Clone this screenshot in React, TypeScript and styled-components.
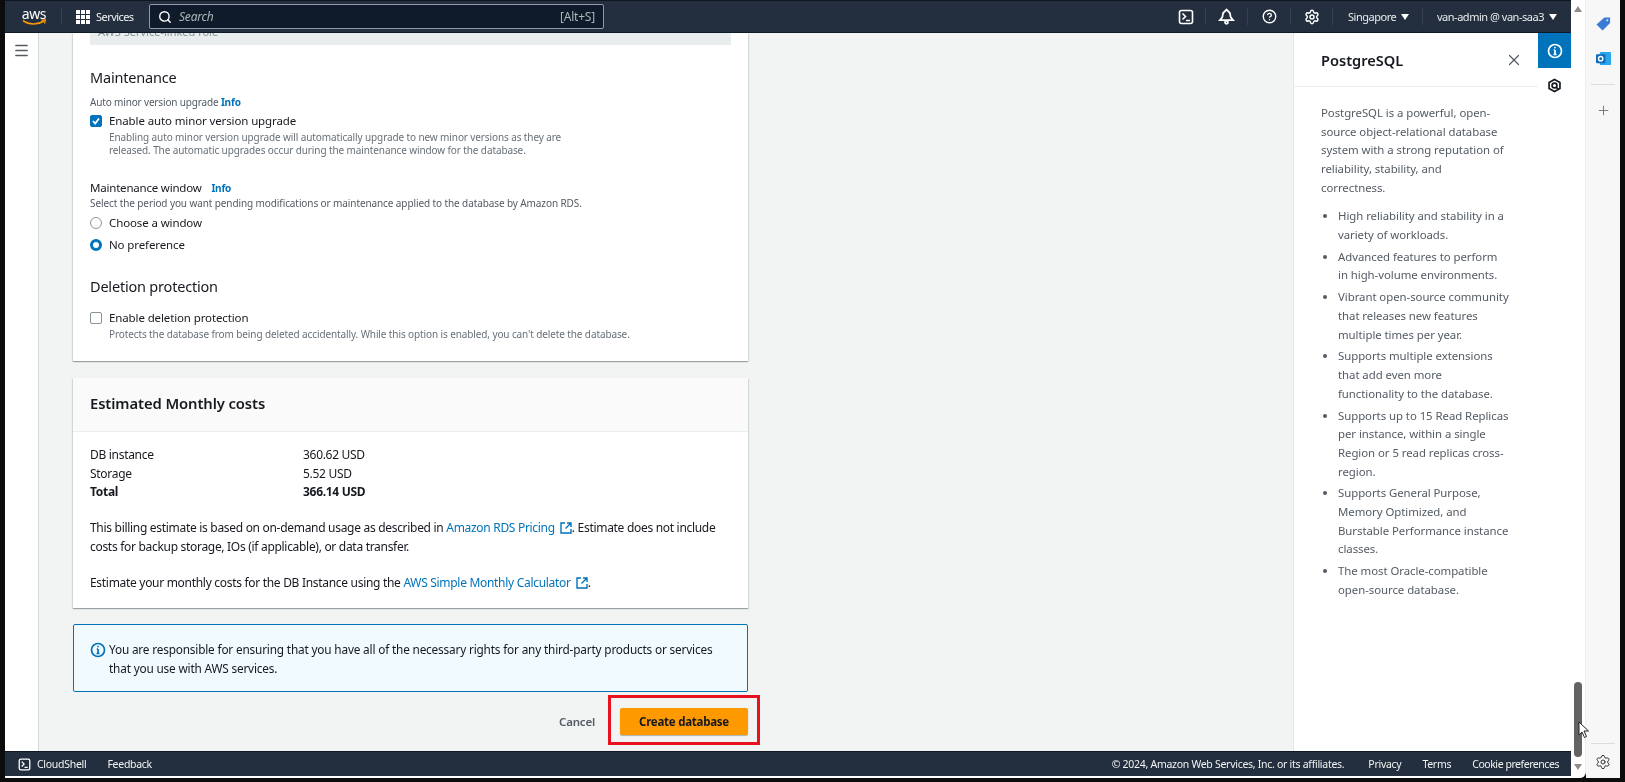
import React from 'react'
import styled, { createGlobalStyle } from 'styled-components'
import { Menu, Search, X, Plus, Settings, CircleHelp } from 'lucide-react'

const GlobalStyle = createGlobalStyle`
  html, body { margin: 0; padding: 0; background: #000; }
  * { box-sizing: border-box; }
  body { font-family: "Noto Sans", Roboto, sans-serif; }
`

const Frame = styled.div`
  width: 1625px;
  height: 782px;
  padding: 0 5px 4px;
  background: #0c0c0c;
  display: flex;
  overflow: hidden;
  position: relative;
  filter: blur(0.3px);
`

const Page = styled.div`
  width: 1566px;
  display: flex;
  flex-direction: column;
  background: #fff;
`

const TopNav = styled.header`
  height: 33px;
  flex: none;
  background: #232f3e;
  border-top: 1px solid #10161f;
  border-bottom: 1px solid #0e1a2a;
  display: flex;
  align-items: center;
  color: #e9ebed;
  font-size: 11px;
  letter-spacing: -0.25px;
`

const LogoBox = styled.div`
  width: 49px;
  margin-left: 7px;
  padding-right: 5px;
  display: flex;
  flex-direction: column;
  align-items: center;
  font-size: 14px;
  line-height: 12px;
  color: #fff;
  letter-spacing: -0.4px;
  svg { margin-top: -1px; }
`

const NavSep = styled.span`
  width: 1px;
  height: 17px;
  background: #38424f;
`

const ServicesBtn = styled.div`
  display: flex;
  align-items: center;
  gap: 6px;
  margin-left: 14px;
  width: 73px;
  color: #f2f3f3;
  letter-spacing: -0.55px;
`

const DotGrid = styled.div`
  display: grid;
  grid-template-columns: repeat(3, 4px);
  grid-auto-rows: 4px;
  gap: 1px;
  i { background: #fff; display: block; }
`

const SearchBox = styled.div`
  width: 455px;
  height: 25px;
  background: #0f1b2a;
  border: 1px solid #8d99a8;
  border-radius: 2px;
  display: flex;
  align-items: center;
  padding: 0 8px;
  gap: 7px;
  color: #aab7b8;
  font-size: 12px;
  letter-spacing: -0.2px;
  svg { color: #fff; }
`

const SearchHint = styled.span`
  font-style: italic;
  flex: 1;
`

const NavRight = styled.div`
  margin-left: auto;
  display: flex;
  align-items: center;
  height: 100%;
`

const NavIcon = styled.div`
  width: 42.5px;
  height: 100%;
  display: flex;
  align-items: center;
  justify-content: center;
  color: #fff;
  position: relative;
  &:first-child { padding-left: 4px; }
  &::after {
    content: '';
    position: absolute;
    right: 0;
    top: 7px;
    bottom: 7px;
    width: 1px;
    background: #38424f;
  }
`

const NavMenu = styled.div<{ $w: number; $pad: number; $sep?: boolean }>`
  width: ${(p) => p.$w}px;
  height: 100%;
  padding-left: ${(p) => p.$pad}px;
  display: flex;
  align-items: center;
  gap: 5px;
  white-space: nowrap;
  position: relative;
  letter-spacing: -0.48px;
  ${(p) =>
    p.$sep &&
    `&::after {
      content: '';
      position: absolute;
      right: 0;
      top: 7px;
      bottom: 7px;
      width: 1px;
      background: #38424f;
    }`}
`

const Caret = styled.span`
  width: 0;
  height: 0;
  border-left: 4.5px solid transparent;
  border-right: 4.5px solid transparent;
  border-top: 6px solid #fff;
`

const Body = styled.div`
  flex: 1;
  min-height: 0;
  display: flex;
  background: #f2f3f3;
`

const LeftRail = styled.nav`
  width: 34px;
  flex: none;
  background: #fff;
  border-right: 1px solid #d5dbdb;
  display: flex;
  justify-content: center;
  padding-top: 9px;
  color: #545b64;
`

const Main = styled.main`
  flex: 1;
  min-width: 0;
  padding-left: 34px;
  color: #16191f;
  overflow: hidden;
`

const Card = styled.section`
  width: 675px;
  background: #fff;
  box-shadow: 0 1px 1px 0 rgba(0, 28, 36, 0.22), 1px 1px 1px 0 rgba(0, 28, 36, 0.1), -1px 1px 1px 0 rgba(0, 28, 36, 0.1);
`

const FormCard = styled(Card)`
  height: 328px;
  padding: 0 17px;
`

const ClippedRole = styled.div`
  height: 12px;
  background: #eaeded;
  overflow: hidden;
  color: #879596;
  font-size: 11px;
  line-height: 12px;
  padding-left: 8px;
  span { display: block; margin-top: -7px; }
`

const Heading = styled.h3<{ $mt: number }>`
  margin: ${(p) => p.$mt}px 0 0;
  font-size: 14.5px;
  font-weight: 400;
  line-height: 22px;
  letter-spacing: -0.2px;
  color: #16191f;
`

const Caption = styled.div<{ $mt?: number; $track?: number }>`
  margin-top: ${(p) => p.$mt ?? 0}px;
  font-size: 10px;
  line-height: 16px;
  color: #545b64;
  letter-spacing: ${(p) => p.$track ?? -0.1}px;
`

const FieldLabel = styled.div<{ $mt: number }>`
  margin-top: ${(p) => p.$mt}px;
  font-size: 11.5px;
  line-height: 18px;
  color: #16191f;
  letter-spacing: -0.2px;
`

const InfoLink = styled.a<{ $ml?: number }>`
  color: #0073bb;
  font-weight: 700;
  font-size: 10px;
  margin-left: ${(p) => p.$ml ?? 0}px;
`

const OptionRow = styled.div<{ $mt: number }>`
  margin-top: ${(p) => p.$mt}px;
  display: flex;
  align-items: center;
  gap: 7px;
  font-size: 11.5px;
  line-height: 18px;
  color: #16191f;
  letter-spacing: -0.12px;
`

const Checkbox = styled.span<{ $on?: boolean }>`
  width: 12px;
  height: 12px;
  flex: none;
  border-radius: 2px;
  display: flex;
  align-items: center;
  justify-content: center;
  background: ${(p) => (p.$on ? '#0073bb' : '#fff')};
  border: 1px solid ${(p) => (p.$on ? '#0073bb' : '#879596')};
`

const Radio = styled.span<{ $on?: boolean }>`
  width: 12px;
  height: 12px;
  flex: none;
  border-radius: 50%;
  background: #fff;
  border: ${(p) => (p.$on ? '3.5px solid #0073bb' : '1px solid #879596')};
`

const OptionDesc = styled.div`
  margin-left: 19px;
  font-size: 10px;
  line-height: 13px;
  color: #687078;
  letter-spacing: -0.11px;
  padding-top: 1px;
  white-space: nowrap;
`

const CostCard = styled(Card)`
  margin-top: 17px;
  height: 230px;
`

const CostHeader = styled.div`
  height: 54px;
  background: #fafafa;
  border-bottom: 1px solid #eaeded;
  padding: 0 17px 4px;
  display: flex;
  align-items: center;
  font-size: 14.8px;
  font-weight: 600;
  letter-spacing: -0.1px;
`

const CostBody = styled.div`
  padding: 14px 17px 0;
  font-size: 12px;
  line-height: 18.5px;
  letter-spacing: -0.3px;
  color: #16191f;
`

const CostRow = styled.div<{ $bold?: boolean }>`
  display: grid;
  grid-template-columns: 213px 1fr;
  font-weight: ${(p) => (p.$bold ? 700 : 400)};
`

const CostNote = styled.p`
  margin: 17.5px 0 0;
  white-space: nowrap;
`

const ExtLink = styled.a`
  color: #0073bb;
  svg { vertical-align: -2px; margin-left: 5px; }
`

const Alert = styled.div`
  margin-top: 16px;
  width: 675px;
  height: 68px;
  background: #f1faff;
  border: 1px solid #0073bb;
  border-radius: 2px;
  padding: 15px 17px 0 16px;
  display: flex;
  gap: 3px;
  font-size: 11.8px;
  line-height: 18.6px;
  letter-spacing: -0.17px;
  white-space: nowrap;
  color: #16191f;
  svg { flex: none; margin-top: 2px; }
`

const Actions = styled.div`
  margin-top: 16px;
  width: 675px;
  display: flex;
  justify-content: flex-end;
  align-items: center;
  gap: 25px;
`

const CancelBtn = styled.span`
  color: #545b64;
  font-size: 11.5px;
  font-weight: 600;
  letter-spacing: -0.2px;
`

const PrimaryBtn = styled.button`
  width: 128px;
  height: 27px;
  background: #ff9900;
  border: none;
  border-radius: 2px;
  font-family: inherit;
  font-size: 11.5px;
  font-weight: 700;
  letter-spacing: -0.25px;
  color: #16191f;
  position: relative;
  box-shadow: 0 1px 1px rgba(0, 28, 36, 0.3);
  &::after {
    content: '';
    position: absolute;
    inset: -13px -12px -10px;
    border: 3px solid #e8111f;
  }
`

const HelpPanel = styled.aside`
  width: 245px;
  flex: none;
  background: #fff;
  border-left: 1px solid #e4e7e7;
  display: flex;
  flex-direction: column;
`

const HelpHeader = styled.div`
  height: 54px;
  flex: none;
  border-bottom: 1px solid #eaeded;
  padding: 0 15px 0 27px;
  display: flex;
  align-items: center;
  justify-content: space-between;
  font-size: 14.6px;
  font-weight: 600;
  color: #16191f;
`

const HelpContent = styled.div`
  padding: 17px 0 0 27px;
  font-size: 11.4px;
  line-height: 18.65px;
  letter-spacing: -0.05px;
  color: #545b64;
  white-space: nowrap;
  p { margin: 0 0 10px; }
  ul { margin: 0; padding-left: 17px; }
  li { margin-bottom: 3.2px; }
`

const ToolsRail = styled.div`
  width: 33px;
  flex: none;
  background: #fff;
  display: flex;
  flex-direction: column;
`

const ToolBtn = styled.div<{ $active?: boolean }>`
  height: 35px;
  display: flex;
  align-items: center;
  justify-content: center;
  background: ${(p) => (p.$active ? '#0073bb' : '#fff')};
  color: ${(p) => (p.$active ? '#fff' : '#16191f')};
`

const Footer = styled.footer`
  height: 25px;
  flex: none;
  background: #232f3e;
  border-top: 1px solid #0f1822;
  color: #f2f3f3;
  display: flex;
  align-items: center;
  padding-left: 13px;
  font-size: 10.5px;
  letter-spacing: -0.28px;
  white-space: nowrap;
`

const FootLink = styled.span<{ $ml?: number }>`
  margin-left: ${(p) => p.$ml ?? 0}px;
  display: flex;
  align-items: center;
  gap: 6px;
`

const FootRight = styled.div`
  margin-left: auto;
  padding-right: 12px;
  display: flex;
  align-items: center;
  gap: 21px;
`

const Copyright = styled.span`
  margin-right: 3px;
`

const CookieLink = styled.span`
  letter-spacing: -0.45px;
`

const BottomStrip = styled.div`
  height: 2px;
  flex: none;
  background: #fff;
`

const Track = styled.div`
  width: 15px;
  flex: none;
  background: #fff;
  border-right: 1px solid #eee;
  border-bottom-right-radius: 6px;
  display: flex;
  flex-direction: column;
  align-items: center;
  padding-top: 6px;
`

const ScrollUp = styled.span`
  width: 0;
  height: 0;
  border-left: 4px solid transparent;
  border-right: 4px solid transparent;
  border-bottom: 6px solid #8c8c8c;
`

const ScrollDown = styled.span`
  width: 0;
  height: 0;
  margin-top: 7px;
  border-left: 4px solid transparent;
  border-right: 4px solid transparent;
  border-top: 6px solid #8c8c8c;
`

const Thumb = styled.div`
  width: 8px;
  height: 75px;
  margin-top: 670px;
  border-radius: 4px;
  background: #636363;
`

const EdgeBar = styled.div`
  width: 34px;
  flex: none;
  background: #f7f7f7;
  display: flex;
  flex-direction: column;
  align-items: center;
  padding-top: 16px;
  color: #6b6b6b;
`

const EdgeSep = styled.div`
  width: 24px;
  height: 1px;
  background: #dcdcdc;
`

const EdgeSlot = styled.div<{ $mt: number }>`
  margin-top: ${(p) => p.$mt}px;
  display: flex;
`

const Pointer = styled.svg`
  position: absolute;
  left: 1578px;
  top: 721px;
`

const TerminalIcon = ({ size = 16 }: { size?: number }) => (
  <svg width={size} height={size} viewBox="0 0 16 16" fill="none" stroke="#fff" strokeWidth="1.6">
    <rect x="1.5" y="1.5" width="13" height="13" rx="2" />
    <path d="M4.5 4.5 7.5 7.5 4.5 10.5M8 11.5h4" />
  </svg>
)

const InfoIcon = ({ color }: { color: string }) => (
  <svg width="16" height="16" viewBox="0 0 16 16" fill="none" stroke={color} strokeWidth="1.7">
    <circle cx="8" cy="8" r="6.5" />
    <path d="M8 7v4.5M6.5 11.5h3M6.8 7H8" />
    <circle cx="8" cy="4.6" r="0.9" fill={color} stroke="none" />
  </svg>
)

const ExternalIcon = () => (
  <svg width="12" height="12" viewBox="0 0 12 12" fill="none" stroke="#0073bb" strokeWidth="1.4">
    <path d="M5 1H1v10h10V7M7 1h4v4M11 1 5.5 6.5" />
  </svg>
)

const App: React.FC = () => {
  return (
    <>
      <GlobalStyle />
      <Frame>
        <Page>
          <TopNav>
            <LogoBox>
              <span>aws</span>
              <svg width="26" height="7" viewBox="0 0 26 7" fill="none">
                <path d="M2 1.5C8 6 17 6 23 2" stroke="#f90" strokeWidth="1.6" />
                <path d="M20.5 1.2 24.5 1 23.5 4.6" stroke="#f90" strokeWidth="1.2" />
              </svg>
            </LogoBox>
            <NavSep />
            <ServicesBtn>
              <DotGrid>
                {Array.from({ length: 9 }).map((_, i) => (
                  <i key={i} />
                ))}
              </DotGrid>
              <span>Services</span>
            </ServicesBtn>
            <SearchBox>
              <Search size={14} strokeWidth={2.4} />
              <SearchHint>Search</SearchHint>
              <span>[Alt+S]</span>
            </SearchBox>
            <NavRight>
              <NavIcon>
                <TerminalIcon />
              </NavIcon>
              <NavIcon>
                <svg width="17" height="17" viewBox="0 0 16 16" fill="none" stroke="#fff" strokeWidth="1.7">
                  <path d="M8 1.5 5 4.5c-.6 1-.5 3-1 4.3L1.8 11.5h12.4L12 8.8c-.5-1.3-.4-3.3-1-4.3Z" />
                  <circle cx="8" cy="13.5" r="1.4" />
                </svg>
              </NavIcon>
              <NavIcon>
                <CircleHelp size={15} strokeWidth={2.2} />
              </NavIcon>
              <NavIcon>
                <Settings size={16} strokeWidth={2.2} />
              </NavIcon>
              <NavMenu $w={90} $pad={15} $sep>
                <span>Singapore</span>
                <Caret />
              </NavMenu>
              <NavMenu $w={148} $pad={14}>
                <span>van-admin @ van-saa3</span>
                <Caret />
              </NavMenu>
            </NavRight>
          </TopNav>
          <Body>
            <LeftRail>
              <Menu size={17} strokeWidth={2} />
            </LeftRail>
            <Main>
              <FormCard>
                <ClippedRole>
                  <span>AWS Service-linked role</span>
                </ClippedRole>
                <Heading $mt={21}>Maintenance</Heading>
                <Caption $mt={6} $track={-0.16}>
                  Auto minor version upgrade <InfoLink>Info</InfoLink>
                </Caption>
                <OptionRow $mt={2}>
                  <Checkbox $on>
                    <svg width="10" height="10" viewBox="0 0 10 10" fill="none" stroke="#fff" strokeWidth="1.8">
                      <path d="M2 5 4.2 7.5 8 2.5" />
                    </svg>
                  </Checkbox>
                  Enable auto minor version upgrade
                </OptionRow>
                <OptionDesc>
                  Enabling auto minor version upgrade will automatically upgrade to new minor versions as they are
                  <br />
                  released. The automatic upgrades occur during the maintenance window for the database.
                </OptionDesc>
                <FieldLabel $mt={22}>
                  Maintenance window <InfoLink $ml={7}>Info</InfoLink>
                </FieldLabel>
                <Caption $mt={-2}>Select the period you want pending modifications or maintenance applied to the database by Amazon RDS.</Caption>
                <OptionRow $mt={3}>
                  <Radio />
                  Choose a window
                </OptionRow>
                <OptionRow $mt={4}>
                  <Radio $on />
                  No preference
                </OptionRow>
                <Heading $mt={21}>Deletion protection</Heading>
                <OptionRow $mt={12}>
                  <Checkbox />
                  Enable deletion protection
                </OptionRow>
                <OptionDesc>Protects the database from being deleted accidentally. While this option is enabled, you can't delete the database.</OptionDesc>
              </FormCard>

              <CostCard>
                <CostHeader>Estimated Monthly costs</CostHeader>
                <CostBody>
                  <CostRow>
                    <span>DB instance</span>
                    <span>360.62 USD</span>
                  </CostRow>
                  <CostRow>
                    <span>Storage</span>
                    <span>5.52 USD</span>
                  </CostRow>
                  <CostRow $bold>
                    <span>Total</span>
                    <span>366.14 USD</span>
                  </CostRow>
                  <CostNote>
                    This billing estimate is based on on-demand usage as described in{' '}
                    <ExtLink>
                      Amazon RDS Pricing
                      <ExternalIcon />
                    </ExtLink>
                    . Estimate does not include
                    <br />
                    costs for backup storage, IOs (if applicable), or data transfer.
                  </CostNote>
                  <CostNote>
                    Estimate your monthly costs for the DB Instance using the{' '}
                    <ExtLink>
                      AWS Simple Monthly Calculator
                      <ExternalIcon />
                    </ExtLink>
                    .
                  </CostNote>
                </CostBody>
              </CostCard>

              <Alert>
                <InfoIcon color="#0073bb" />
                <div>
                  You are responsible for ensuring that you have all of the necessary rights for any third-party products or services
                  <br />
                  that you use with AWS services.
                </div>
              </Alert>

              <Actions>
                <CancelBtn>Cancel</CancelBtn>
                <PrimaryBtn>Create database</PrimaryBtn>
              </Actions>
            </Main>
            <HelpPanel>
              <HelpHeader>
                <span>PostgreSQL</span>
                <X size={18} strokeWidth={1.6} color="#545b64" />
              </HelpHeader>
              <HelpContent>
                <p>
                  PostgreSQL is a powerful, open-
                  <br />
                  source object-relational database
                  <br />
                  system with a strong reputation of
                  <br />
                  reliability, stability, and
                  <br />
                  correctness.
                </p>
                <ul>
                  <li>
                    High reliability and stability in a
                    <br />
                    variety of workloads.
                  </li>
                  <li>
                    Advanced features to perform
                    <br />
                    in high-volume environments.
                  </li>
                  <li>
                    Vibrant open-source community
                    <br />
                    that releases new features
                    <br />
                    multiple times per year.
                  </li>
                  <li>
                    Supports multiple extensions
                    <br />
                    that add even more
                    <br />
                    functionality to the database.
                  </li>
                  <li>
                    Supports up to 15 Read Replicas
                    <br />
                    per instance, within a single
                    <br />
                    Region or 5 read replicas cross-
                    <br />
                    region.
                  </li>
                  <li>
                    Supports General Purpose,
                    <br />
                    Memory Optimized, and
                    <br />
                    Burstable Performance instance
                    <br />
                    classes.
                  </li>
                  <li>
                    The most Oracle-compatible
                    <br />
                    open-source database.
                  </li>
                </ul>
              </HelpContent>
            </HelpPanel>
            <ToolsRail>
              <ToolBtn $active>
                <InfoIcon color="#fff" />
              </ToolBtn>
              <ToolBtn>
                <svg width="15" height="15" viewBox="0 0 16 16" fill="none" stroke="#16191f" strokeWidth="1.8">
                  <path d="M8 1.5 13.8 4.7V11.3L8 14.5 2.2 11.3V4.7Z" />
                  <circle cx="8" cy="8" r="2.6" />
                  <path d="M10 10 12 12" />
                </svg>
              </ToolBtn>
            </ToolsRail>
          </Body>
          <Footer>
            <FootLink>
              <TerminalIcon size={13} />
              CloudShell
            </FootLink>
            <FootLink $ml={21}>Feedback</FootLink>
            <FootRight>
              <Copyright>© 2024, Amazon Web Services, Inc. or its affiliates.</Copyright>
              <span>Privacy</span>
              <span>Terms</span>
              <CookieLink>Cookie preferences</CookieLink>
            </FootRight>
          </Footer>
          <BottomStrip />
        </Page>
        <Track>
          <ScrollUp />
          <Thumb />
          <ScrollDown />
        </Track>
        <EdgeBar>
          <svg width="15" height="16" viewBox="0 0 16 16">
            <path d="M9 1h6v6l-8 8-6.5-6.5Z" fill="#3a7bd5" />
            <circle cx="12" cy="4" r="1.2" fill="#cfe0fa" />
          </svg>
          <EdgeSlot $mt={19}>
            <svg width="15" height="15" viewBox="0 0 16 16">
              <rect x="4" y="1" width="12" height="14" rx="1" fill="#28a8ea" />
              <rect x="0" y="3.5" width="10" height="9.5" rx="1" fill="#0f6cbd" />
              <circle cx="5" cy="8.2" r="2.3" fill="none" stroke="#fff" strokeWidth="1.5" />
            </svg>
          </EdgeSlot>
          <EdgeSlot $mt={18}>
            <EdgeSep />
          </EdgeSlot>
          <EdgeSlot $mt={18}>
            <Plus size={15} strokeWidth={1.4} />
          </EdgeSlot>
          <EdgeSlot $mt={625}>
            <EdgeSep />
          </EdgeSlot>
          <EdgeSlot $mt={10}>
            <Settings size={16} strokeWidth={1.5} color="#333" />
          </EdgeSlot>
        </EdgeBar>
        <Pointer width="12" height="18" viewBox="0 0 12 18">
          <path d="M1 1v13l3-3 2.5 5.5 2-1L6 10h4.5Z" fill="#fff" stroke="#222" strokeWidth="1" />
        </Pointer>
      </Frame>
    </>
  )
}

export default App
